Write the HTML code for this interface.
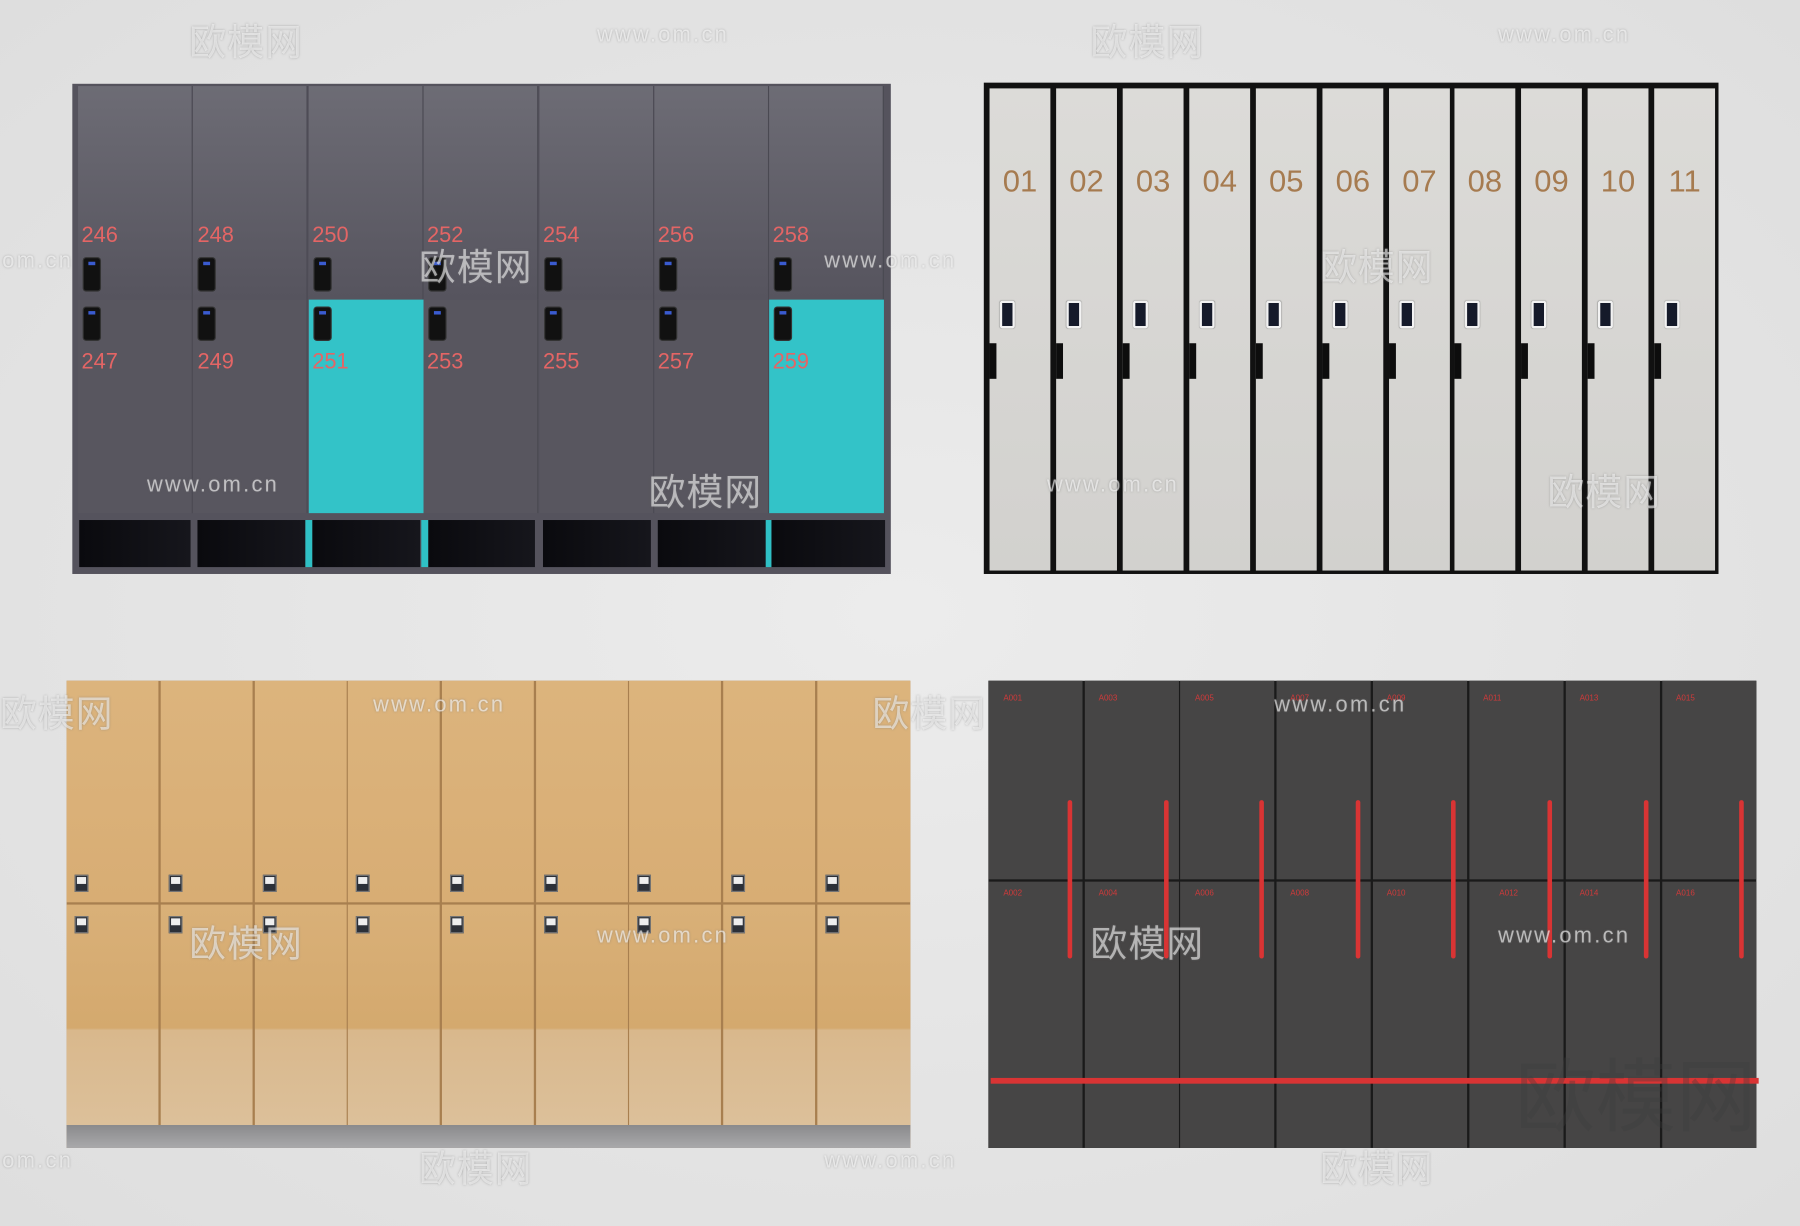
<!DOCTYPE html>
<html><head><meta charset="utf-8"><style>
html,body{margin:0;padding:0;width:1800px;height:1226px;overflow:hidden;background:#e3e3e3}
#s{position:absolute;left:0;top:0;width:1568px;height:1068px;transform:scale(1.14796);transform-origin:0 0;background:radial-gradient(ellipse at 50% 50%,#ececec,#dedede);font-family:"Liberation Sans",sans-serif}
.a{position:absolute}
.tl{left:63px;top:73px;width:713px;height:427px;background:#55535d}
.tl .d{position:absolute;width:100px;background:linear-gradient(#6d6c75,#56545e);border-right:1px solid #4a4952;box-sizing:border-box}
.n1{position:absolute;color:#e46565;font-size:19px}
.kp{position:absolute;width:14px;height:28px;background:#111;border-radius:2px;box-shadow:0 0 0 1px #333}
.kp:after{content:"";position:absolute;left:4px;top:3px;width:6px;height:3px;background:#3a5bd0}
.cb{position:absolute;top:380px;height:41px;background:linear-gradient(90deg,#0a0a0e,#16161c);}
.tr{left:857px;top:72px;width:640px;height:428px;background:#111}
.tr .d{position:absolute;top:5px;bottom:3px;width:53px;background:linear-gradient(#dcdbd8,#d2d1ce)}
.tr .d span{position:absolute;top:66px;left:0;width:100%;text-align:center;color:#a67b50;font-size:27px}
.tr .d i{position:absolute;left:9px;top:185px;width:9px;height:20px;background:#151a2a;border:2px solid #f2f2f2;border-radius:2px;box-shadow:0 0 1px #888}
.tr .d b{position:absolute;left:0;top:222px;width:6px;height:31px;background:#0d0d0d}
.bl{left:58px;top:593px;width:735px;height:407px;background:#a87f4f}
.bl .u{position:absolute;width:80px;top:0;height:193px;background:linear-gradient(#dcb47d,#d8ad74)}
.bl .l{position:absolute;width:80px;top:195px;height:192px;background:linear-gradient(#d9b078,#d4a96e 56%,#d9b88c 57%,#dcc09a)}
.h{position:absolute;width:10px;height:13px;background:#2c3038;border:1px solid #777}
.h:after{content:"";position:absolute;left:1px;top:1px;width:8px;height:6px;background:#eee}
.br{left:861px;top:593px;width:669px;height:407px;background:#1a1a1a}
.br .d{position:absolute;width:82px;background:#464545}
.lb{position:absolute;color:#d03a3a;font-size:7px}
.rb{position:absolute;width:4px;height:138px;background:#d93434;top:104px;border-radius:2px}
.wm{position:absolute;color:rgba(255,255,255,.55);font-size:32px;font-family:"Liberation Sans","Noto Sans CJK SC",sans-serif;letter-spacing:1px;text-shadow:0 0 2px rgba(120,120,120,.5)}
.ww{position:absolute;color:rgba(255,255,255,.6);font-size:19px;letter-spacing:2px;text-shadow:0 0 2px rgba(120,120,120,.5)}
</style></head><body><div id="s">

<div class="a tl">
 <div class="d" style="left:5px;top:2px;height:186px"></div><div class="d" style="left:105px;top:2px;height:186px"></div><div class="d" style="left:206px;top:2px;height:186px"></div><div class="d" style="left:306px;top:2px;height:186px"></div><div class="d" style="left:407px;top:2px;height:186px"></div><div class="d" style="left:507px;top:2px;height:186px"></div><div class="d" style="left:607px;top:2px;height:186px"></div>
 <div class="d" style="left:5px;top:188px;height:186px;background:#58565f"></div><div class="d" style="left:105px;top:188px;height:186px;background:#58565f"></div><div class="d" style="left:206px;top:188px;height:186px;background:#33c3c8;border:0"></div><div class="d" style="left:306px;top:188px;height:186px;background:#58565f"></div><div class="d" style="left:407px;top:188px;height:186px;background:#58565f"></div><div class="d" style="left:507px;top:188px;height:186px;background:#58565f"></div><div class="d" style="left:607px;top:188px;height:186px;background:#33c3c8;border:0"></div>
 <div class="n1" style="left:8px;top:122px">246</div><div class="n1" style="left:109px;top:122px">248</div><div class="n1" style="left:209px;top:122px">250</div><div class="n1" style="left:309px;top:122px">252</div><div class="n1" style="left:410px;top:122px">254</div><div class="n1" style="left:510px;top:122px">256</div><div class="n1" style="left:610px;top:122px">258</div>
 <div class="n1" style="left:8px;top:232px">247</div><div class="n1" style="left:109px;top:232px">249</div><div class="n1" style="left:209px;top:232px">251</div><div class="n1" style="left:309px;top:232px">253</div><div class="n1" style="left:410px;top:232px">255</div><div class="n1" style="left:510px;top:232px">257</div><div class="n1" style="left:610px;top:232px">259</div>
 <div class="kp" style="left:10px;top:152px"></div><div class="kp" style="left:110px;top:152px"></div><div class="kp" style="left:211px;top:152px"></div><div class="kp" style="left:311px;top:152px"></div><div class="kp" style="left:412px;top:152px"></div><div class="kp" style="left:512px;top:152px"></div><div class="kp" style="left:612px;top:152px"></div>
 <div class="kp" style="left:10px;top:195px"></div><div class="kp" style="left:110px;top:195px"></div><div class="kp" style="left:211px;top:195px"></div><div class="kp" style="left:311px;top:195px"></div><div class="kp" style="left:412px;top:195px"></div><div class="kp" style="left:512px;top:195px"></div><div class="kp" style="left:612px;top:195px"></div>
 <div class="cb" style="left:6px;width:97px"></div><div class="cb" style="left:109px;width:94px"></div><div class="cb" style="left:203px;width:100px;border-left:6px solid #2fc0c5;box-sizing:border-box"></div><div class="cb" style="left:304px;width:99px;border-left:6px solid #2fc0c5;box-sizing:border-box"></div><div class="cb" style="left:410px;width:94px"></div><div class="cb" style="left:510px;width:95px"></div><div class="cb" style="left:604px;width:104px;border-left:5px solid #2fc0c5;box-sizing:border-box"></div>
</div>

<div class="a tr">
 <div class="d" style="left:5px"><span>01</span><i></i><b></b></div>
 <div class="d" style="left:63px"><span>02</span><i></i><b></b></div>
 <div class="d" style="left:121px"><span>03</span><i></i><b></b></div>
 <div class="d" style="left:179px"><span>04</span><i></i><b></b></div>
 <div class="d" style="left:237px"><span>05</span><i></i><b></b></div>
 <div class="d" style="left:295px"><span>06</span><i></i><b></b></div>
 <div class="d" style="left:353px"><span>07</span><i></i><b></b></div>
 <div class="d" style="left:410px"><span>08</span><i></i><b></b></div>
 <div class="d" style="left:468px"><span>09</span><i></i><b></b></div>
 <div class="d" style="left:526px"><span>10</span><i></i><b></b></div>
 <div class="d" style="left:584px;width:53px"><span>11</span><i></i><b></b></div>
</div>

<div class="a bl">
 <div class="u" style="left:0"></div><div class="u" style="left:82px"></div><div class="u" style="left:164px"></div><div class="u" style="left:245px"></div><div class="u" style="left:327px"></div><div class="u" style="left:409px"></div><div class="u" style="left:490px"></div><div class="u" style="left:572px"></div><div class="u" style="left:654px;width:81px"></div>
 <div class="l" style="left:0"></div><div class="l" style="left:82px"></div><div class="l" style="left:164px"></div><div class="l" style="left:245px"></div><div class="l" style="left:327px"></div><div class="l" style="left:409px"></div><div class="l" style="left:490px"></div><div class="l" style="left:572px"></div><div class="l" style="left:654px;width:81px"></div>
 <div class="a" style="left:0;top:387px;width:735px;height:20px;background:linear-gradient(#8a8a8c,#a9a9ab)"></div>
 <div class="h" style="left:7px;top:169px"></div><div class="h" style="left:89px;top:169px"></div><div class="h" style="left:171px;top:169px"></div><div class="h" style="left:252px;top:169px"></div><div class="h" style="left:334px;top:169px"></div><div class="h" style="left:416px;top:169px"></div><div class="h" style="left:497px;top:169px"></div><div class="h" style="left:579px;top:169px"></div><div class="h" style="left:661px;top:169px"></div>
 <div class="h" style="left:7px;top:205px"></div><div class="h" style="left:89px;top:205px"></div><div class="h" style="left:171px;top:205px"></div><div class="h" style="left:252px;top:205px"></div><div class="h" style="left:334px;top:205px"></div><div class="h" style="left:416px;top:205px"></div><div class="h" style="left:497px;top:205px"></div><div class="h" style="left:579px;top:205px"></div><div class="h" style="left:661px;top:205px"></div>
</div>

<div class="a br">
 <div class="d" style="left:0;top:0;height:173px"></div><div class="d" style="left:84px;top:0;height:173px"></div><div class="d" style="left:167px;top:0;height:173px"></div><div class="d" style="left:251px;top:0;height:173px"></div><div class="d" style="left:335px;top:0;height:173px"></div><div class="d" style="left:419px;top:0;height:173px"></div><div class="d" style="left:503px;top:0;height:173px"></div><div class="d" style="left:587px;top:0;height:173px"></div>
 <div class="d" style="left:0;top:175px;height:232px"></div><div class="d" style="left:84px;top:175px;height:232px"></div><div class="d" style="left:167px;top:175px;height:232px"></div><div class="d" style="left:251px;top:175px;height:232px"></div><div class="d" style="left:335px;top:175px;height:232px"></div><div class="d" style="left:419px;top:175px;height:232px"></div><div class="d" style="left:503px;top:175px;height:232px"></div><div class="d" style="left:587px;top:175px;height:232px"></div>
 <div class="lb" style="left:13px;top:12px">A001</div><div class="lb" style="left:96px;top:12px">A003</div><div class="lb" style="left:180px;top:12px">A005</div><div class="lb" style="left:263px;top:12px">A007</div><div class="lb" style="left:347px;top:12px">A009</div><div class="lb" style="left:431px;top:12px">A011</div><div class="lb" style="left:515px;top:12px">A013</div><div class="lb" style="left:599px;top:12px">A015</div>
 <div class="lb" style="left:13px;top:182px">A002</div><div class="lb" style="left:96px;top:182px">A004</div><div class="lb" style="left:180px;top:182px">A006</div><div class="lb" style="left:263px;top:182px">A008</div><div class="lb" style="left:347px;top:182px">A010</div><div class="lb" style="left:445px;top:182px">A012</div><div class="lb" style="left:515px;top:182px">A014</div><div class="lb" style="left:599px;top:182px">A016</div>
 <div class="rb" style="left:69px"></div><div class="rb" style="left:153px"></div><div class="rb" style="left:236px"></div><div class="rb" style="left:320px"></div><div class="rb" style="left:403px"></div><div class="rb" style="left:487px"></div><div class="rb" style="left:571px"></div><div class="rb" style="left:654px"></div>
 <div class="a" style="left:2px;top:346px;width:669px;height:5px;background:#d93434"></div>
</div>

<div class="wm" style="left:165px;top:12px">欧模网</div><div class="ww" style="left:520px;top:20px">www.om.cn</div>
<div class="wm" style="left:950px;top:12px">欧模网</div><div class="ww" style="left:1305px;top:20px">www.om.cn</div>
<div class="wm" style="left:365px;top:208px">欧模网</div><div class="ww" style="left:718px;top:217px">www.om.cn</div><div class="ww" style="left:2px;top:217px">om.cn</div>
<div class="wm" style="left:1150px;top:208px">欧模网</div>
<div class="ww" style="left:128px;top:412px">www.om.cn</div><div class="wm" style="left:565px;top:404px">欧模网</div>
<div class="ww" style="left:912px;top:412px">www.om.cn</div><div class="wm" style="left:1348px;top:404px">欧模网</div>
<div class="wm" style="left:0px;top:597px">欧模网</div><div class="ww" style="left:325px;top:604px">www.om.cn</div><div class="wm" style="left:760px;top:597px">欧模网</div><div class="ww" style="left:1110px;top:604px">www.om.cn</div>
<div class="wm" style="left:165px;top:797px">欧模网</div><div class="ww" style="left:520px;top:805px">www.om.cn</div><div class="wm" style="left:950px;top:797px">欧模网</div><div class="ww" style="left:1305px;top:805px">www.om.cn</div>
<div class="ww" style="left:2px;top:1001px">om.cn</div><div class="wm" style="left:365px;top:993px">欧模网</div><div class="ww" style="left:718px;top:1001px">www.om.cn</div><div class="wm" style="left:1150px;top:993px">欧模网</div>
<div class="a" style="left:1320px;top:900px;font-size:70px;color:rgba(60,60,60,.35);font-family:'Noto Sans CJK SC',sans-serif">欧模网</div>
</div></body></html>
